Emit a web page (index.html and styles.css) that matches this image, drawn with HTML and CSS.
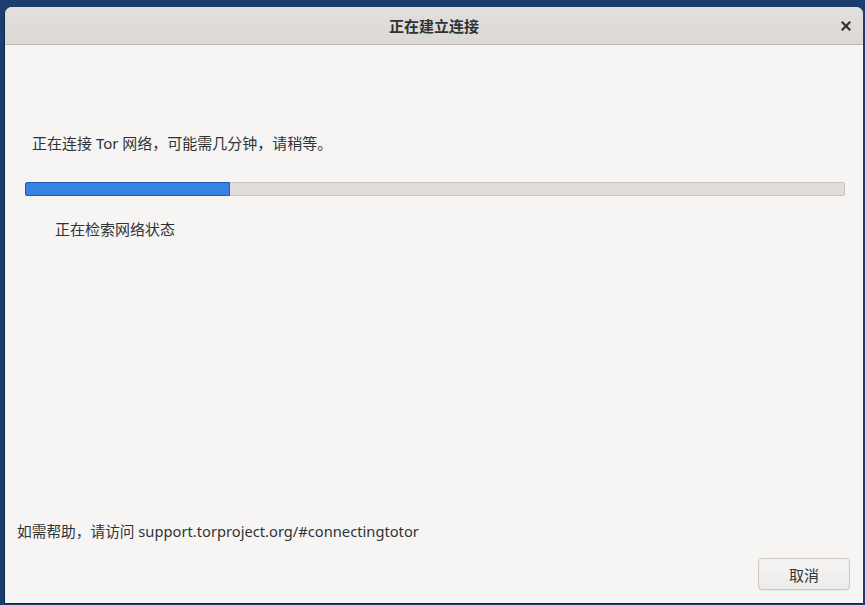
FILE: index.html
```html
<!DOCTYPE html>
<html lang="zh-CN">
<head>
<meta charset="utf-8">
<link rel="stylesheet" href="styles.css">
</head>
<body>
<div class="window">
  <div class="titlebar">
    <span class="title">正在建立连接</span>
    <span class="close">
      <svg width="10" height="10" viewBox="0 0 10 10"><path d="M1.5 1.5 L8.5 8.5 M8.5 1.5 L1.5 8.5" stroke="#2e3436" stroke-width="2.2" stroke-linecap="square"/></svg>
    </span>
  </div>
  <div class="content">
    <p class="msg">正在连接 Tor 网络，可能需几分钟，请稍等。</p>
    <div class="progress"><div class="fill" style="width:24.8%"></div></div>
    <p class="status">正在检索网络状态</p>
    <div class="spacer"></div>
    <p class="help">如需帮助，请访问 support.torproject.org/#connectingtotor</p>
    <div class="actions"><button class="btn">取消</button></div>
  </div>
</div>
</body>
</html>
```
FILE: styles.css
```css
html, body { margin: 0; padding: 0; }
body {
  width: 865px; height: 605px; overflow: hidden;
  background: #1b3d6f;
  font-family: "Noto Sans", "Noto Sans CJK SC", sans-serif;
  color: #2e3436;
  font-size: 15px;
}
.window {
  margin: 7px 2px 0 5px;
  height: 596px;
  background: #f6f5f4;
  border-radius: 7px 7px 0 0;
  display: flex; flex-direction: column;
  box-shadow: -1px 1px 0 #0f2547;
}
.titlebar {
  height: 37px;
  flex: none;
  border-bottom: 1px solid #bdb8b3;
  background: linear-gradient(#e2dfdc, #dcd8d4);
  border-radius: 7px 7px 0 0;
  display: flex; align-items: center; justify-content: center;
  position: relative;
}
.title { font-weight: bold; font-size: 15px; color: #2e3436; }
.close { position: absolute; right: 12px; top: 14px; width: 10px; height: 10px; display: flex; }
.content { flex: 1; display: flex; flex-direction: column; }
.msg { margin: 88px 0 0 27px; line-height: 20px; }
.progress {
  margin: 29px 18px 0 20px;
  height: 12px;
  background: #e0ddda;
  border: 1px solid #c6c2be;
  border-radius: 2px;
  display: flex;
}
.fill {
  background: #3584e4;
  border: 1px solid #1c5cb0;
  margin: -1px 0 -1px -1px;
  border-radius: 2px 0 0 2px;
}
.status { margin: 23px 0 0 50px; line-height: 20px; }
.spacer { flex: 1; }
.help { margin: 0 0 0 12px; line-height: 20px; font-size: 14.7px; }
.actions { display: flex; justify-content: flex-end; padding: 17px 13px 13px 0; }
.btn {
  width: 92px; height: 32px;
  font-family: inherit; font-size: 15px; color: #2e3436;
  background: linear-gradient(#f6f5f4, #edebe9);
  border: 1px solid #cdc7c2;
  border-radius: 4px;
  box-shadow: 0 1px 0 rgba(0,0,0,0.05);
}
```
